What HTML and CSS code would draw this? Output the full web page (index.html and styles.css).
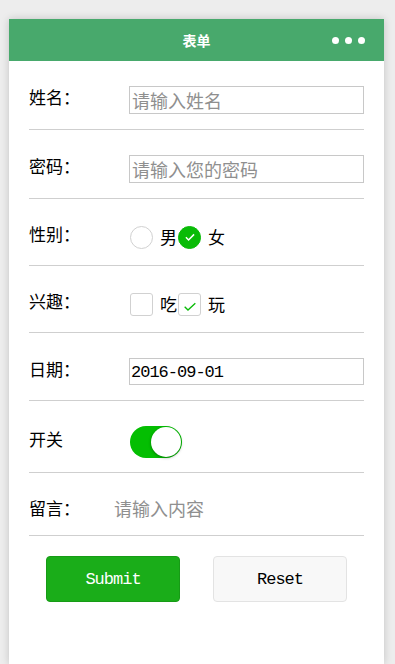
FILE: index.html
```html
<!DOCTYPE html>
<html lang="zh-CN">
  <head>
    <meta charset="UTF-8" />
    <meta name="viewport" content="width=device-width, initial-scale=1.0" />
    <title>表单</title>
    <link rel="stylesheet" href="styles.css">
  </head>
  <body>
    <div class="page">
      <header class="nav">
        <h1>表单</h1>
        <div class="nav-more"><span></span><span></span><span></span></div>
      </header>

      <form class="form">
        <div class="row">
          <label class="label">姓名：</label>
          <input class="field" type="text" placeholder="请输入姓名" />
        </div>

        <div class="row">
          <label class="label">密码：</label>
          <input class="field" type="password" placeholder="请输入您的密码" />
        </div>

        <div class="row row-choice">
          <label class="label">性别：</label>
          <div class="choices">
            <span class="radio"></span><span class="choice-text">男</span>
            <span class="radio checked">
              <svg viewBox="0 0 24 24" width="14" height="14"><path d="M5 12.5l4.5 4.5L19 7.5" fill="none" stroke="#fff" stroke-width="2.6"/></svg>
            </span><span class="choice-text">女</span>
          </div>
        </div>

        <div class="row row-choice">
          <label class="label">兴趣：</label>
          <div class="choices">
            <span class="checkbox"></span><span class="choice-text">吃</span>
            <span class="checkbox">
              <svg viewBox="0 0 24 24" width="16" height="16" class="tick"><path d="M4 13l5 5L20 8" fill="none" stroke="#09bb07" stroke-width="2"/></svg>
            </span><span class="choice-text">玩</span>
          </div>
        </div>

        <div class="row">
          <label class="label">日期：</label>
          <div class="field date">2016-09-01</div>
        </div>

        <div class="row row-switch">
          <label class="label">开关</label>
          <span class="switch"><span class="knob"></span></span>
        </div>

        <div class="row row-msg">
          <label class="label label-short">留言：</label>
          <input class="msg" type="text" placeholder="请输入内容" />
        </div>

        <div class="buttons">
          <button type="button" class="btn btn-primary">Submit</button>
          <button type="button" class="btn btn-default">Reset</button>
        </div>
      </form>
    </div>
  </body>
</html>
```

FILE: styles.css
```css
* {
  margin: 0;
  padding: 0;
  box-sizing: border-box;
}

html,
body {
  height: 100%;
}

body {
  background: #ededed;
  font-family: "Noto Sans CJK SC", "Noto Sans", sans-serif;
  color: #000;
  padding: 19px 11px 0 9px;
  overflow: hidden;
}

.page {
  background: #fff;
  height: 100%;
  box-shadow: 0 0 8px rgba(0, 0, 0, 0.18);
}

.nav {
  height: 42px;
  background: #48a96c;
  display: flex;
  align-items: center;
  justify-content: center;
  position: relative;
}

.nav h1 {
  color: #fff;
  font-size: 14px;
  font-weight: bold;
}

.nav-more {
  position: absolute;
  right: 19px;
  top: 18px;
  display: flex;
  gap: 6px;
}

.nav-more span {
  width: 7px;
  height: 7px;
  border-radius: 50%;
  background: #fff;
}

.form {
  padding: 0 20px;
}

.row {
  display: flex;
  align-items: center;
  padding: 25px 0 15px;
  border-bottom: 1px solid #cfcfcf;
}

.label {
  width: 100px;
  flex-shrink: 0;
  font-size: 17px;
  line-height: 24px;
  margin-top: -6px;
}

.field {
  flex: 1;
  height: 28px;
  border: 1px solid #c8c8c8;
  font-size: 18px;
  font-family: inherit;
  padding: 0 2px;
  outline: none;
  line-height: 26px;
}

.field::placeholder,
.msg::placeholder {
  color: #8f8f8f;
}

.date {
  font-family: "Liberation Mono", monospace;
  font-size: 17px;
  letter-spacing: -1px;
  height: 27px;
  padding: 1px 0 0 1px;
}

.row-choice {
  padding: 26px 0 16px;
}

.choices {
  display: flex;
  align-items: center;
}

.radio,
.checkbox {
  width: 23px;
  height: 23px;
  border: 1px solid #d1d1d1;
  display: flex;
  align-items: center;
  justify-content: center;
  margin-left: 1px;
}

.radio {
  border-radius: 50%;
}

.radio.checked {
  background: #09bb07;
  border-color: #09bb07;
}

.checkbox {
  border-radius: 3px;
}

.tick {
  margin-top: 3px;
}

.choice-text {
  font-size: 17px;
  line-height: 24px;
  margin: 0 0 0 7px;
}

.row-switch {
  padding: 25px 0 14px;
}

.switch {
  margin-left: 1px;
  width: 52px;
  height: 32px;
  border-radius: 16px;
  background: #04be02;
  display: flex;
  justify-content: flex-end;
  align-items: center;
  padding: 1px;
}

.knob {
  width: 30px;
  height: 30px;
  border-radius: 50%;
  background: #fff;
  box-shadow: 0 1px 3px rgba(0, 0, 0, 0.35);
}

.row-msg {
  padding: 23px 0 15px;
}

.label-short {
  width: 85px;
  margin-top: 0;
}

.msg {
  flex: 1;
  border: none;
  font-size: 18px;
  font-family: inherit;
  outline: none;
  height: 24px;
}

.buttons {
  display: flex;
  justify-content: space-between;
  padding: 20px 17px 0;
}

.btn {
  width: 134px;
  height: 46px;
  border-radius: 4px;
  font-family: "Liberation Mono", monospace;
  font-size: 17px;
  letter-spacing: -1px;
}

.btn-primary {
  background: #1aad19;
  color: #fff;
  border: 1px solid #179b16;
}

.btn-default {
  background: #f8f8f8;
  color: #000;
  border: 1px solid #e3e3e3;
}
```
